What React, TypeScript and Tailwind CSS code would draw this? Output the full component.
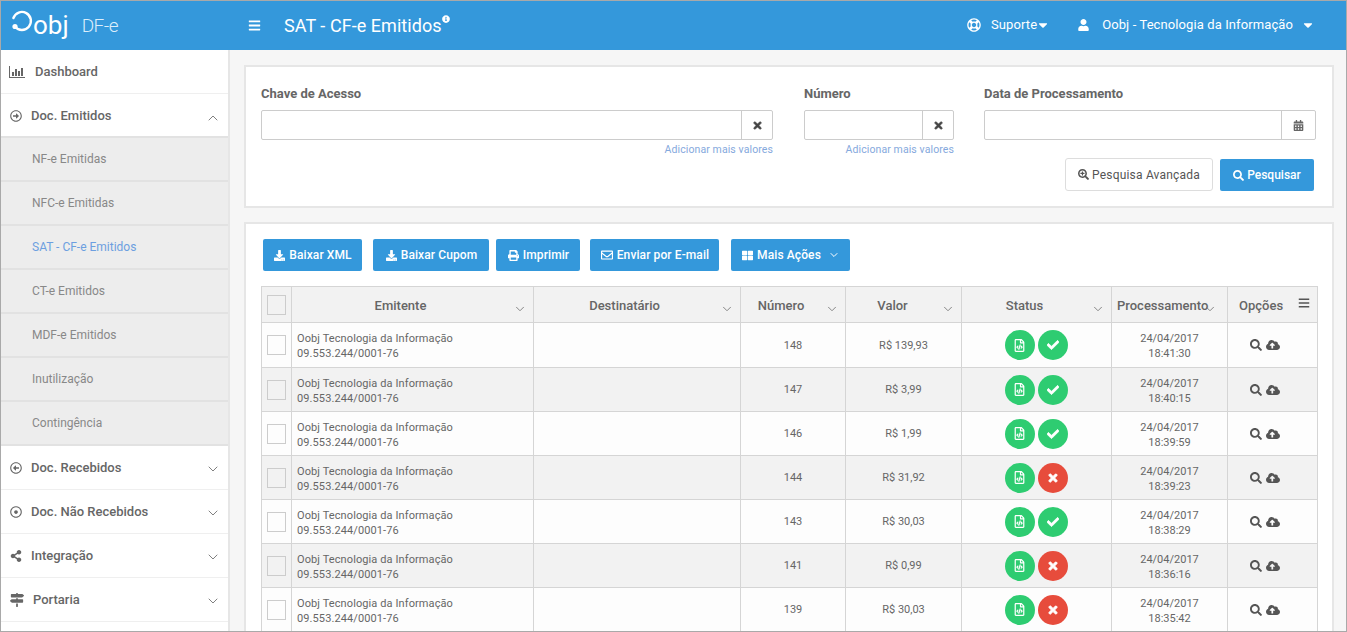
import { ChevronDown, ChevronUp } from 'lucide-react';
import type { ReactNode } from 'react';
import {
  FaBars, FaCalendarAlt, FaCaretDown, FaCheck, FaCloudUploadAlt, FaDownload, FaInfoCircle, FaRegLifeRing,
  FaMapSigns, FaPrint, FaRegArrowAltCircleLeft, FaRegArrowAltCircleRight, FaRegDotCircle, FaRegEnvelope,
  FaRegFileCode, FaSearch, FaSearchPlus, FaShareAlt, FaThLarge, FaTimes, FaUser,
} from 'react-icons/fa';

const subItems = ['NF-e Emitidas', 'NFC-e Emitidas', 'SAT - CF-e Emitidos', 'CT-e Emitidos', 'MDF-e Emitidos', 'Inutilização', 'Contingência'];

const lowerItems = [
  { label: 'Doc. Recebidos', icon: <FaRegArrowAltCircleLeft className="w-3 h-3" />, pad: 'ml-[9px]' },
  { label: 'Doc. Não Recebidos', icon: <FaRegDotCircle className="w-3 h-3" />, pad: 'ml-[9px]' },
  { label: 'Integração', icon: <FaShareAlt className="w-3 h-3" />, pad: 'ml-[9px]' },
  { label: 'Portaria', icon: <FaMapSigns className="w-[14px] h-[14px]" />, pad: 'ml-[9px]' },
];

const rows = [
  { num: '148', valor: 'R$ 139,93', ok: true, date: '24/04/2017', time: '18:41:30' },
  { num: '147', valor: 'R$ 3,99', ok: true, date: '24/04/2017', time: '18:40:15' },
  { num: '146', valor: 'R$ 1,99', ok: true, date: '24/04/2017', time: '18:39:59' },
  { num: '144', valor: 'R$ 31,92', ok: false, date: '24/04/2017', time: '18:39:23' },
  { num: '143', valor: 'R$ 30,03', ok: true, date: '24/04/2017', time: '18:38:29' },
  { num: '141', valor: 'R$ 0,99', ok: false, date: '24/04/2017', time: '18:36:16' },
  { num: '139', valor: 'R$ 30,03', ok: false, date: '24/04/2017', time: '18:35:42' },
];

const headers = [
  { label: 'Emitente', w: 'w-[242px]', lbl: 'pr-[24px]' },
  { label: 'Destinatário', w: 'w-[207px]', lbl: 'pr-[25px]' },
  { label: 'Número', w: 'w-[105px]', lbl: 'pr-[24px]' },
  { label: 'Valor', w: 'w-[116px]', lbl: 'pr-[22px]' },
  { label: 'Status', w: 'w-[150px]', lbl: 'pr-[24px]' },
];

function Logo() {
  return (
    <div className="flex items-center w-[229px] pl-[9px] text-white">
      <svg width="23" height="24" viewBox="0 0 23 24" fill="none" className="mt-[-8px]">
        <path d="M3.4 9 A9 9 0 1 1 5 17.7" stroke="white" strokeWidth="2.4" strokeLinecap="round" />
        <circle cx="5" cy="17.5" r="2.6" fill="white" />
      </svg>
      <span className="text-[26px] font-normal leading-none mt-[-1px]">obj</span>
      <span className="text-[19px] font-light text-[#dbeefb] ml-[13px] tracking-[-0.5px] mt-[3px]">DF-e</span>
    </div>
  );
}

function Header() {
  return (
    <header className="h-[49px] pb-[1px] bg-[#3498db] flex items-center text-white shrink-0">
      <Logo />
      <FaBars className="w-[13px] h-[13px] ml-[18px]" />
      <h1 className="text-[18px] ml-[23px] flex tracking-[0.05px]">
        SAT - CF-e Emitidos
        <FaInfoCircle className="w-[8px] h-[8px] mt-[3px]" />
      </h1>
      <div className="ml-auto flex items-center text-[13px] tracking-[0.1px] pr-[31px]">
        <FaRegLifeRing className="w-[14px] h-[14px]" />
        <span className="ml-[10px]">Suporte</span>
        <FaCaretDown className="w-[14px] h-[14px] -ml-[1px]" />
        <FaUser className="w-[11px] h-[12px] ml-[28px]" />
        <span className="ml-[13px]">Oobj - Tecnologia da Informação</span>
        <FaCaretDown className="w-[14px] h-[14px] ml-[8px]" />
      </div>
    </header>
  );
}

function Sidebar() {
  return (
    <aside className="w-[229px] shrink-0 bg-white border-r-2 border-[#e6e6e6] text-[#666]">
      <div className="h-[44px] flex items-center pl-[8px] border-b border-[#efefef] text-[13px] font-medium">
        <svg width="16" height="12" viewBox="0 0 16 12" className="text-[#666]" fill="currentColor">
          <path d="M0 0h1v11h15v1H0z" />
          <rect x="3" y="6" width="2" height="4" />
          <rect x="6" y="3" width="2" height="7" />
          <rect x="9" y="5" width="2" height="5" />
          <rect x="12" y="2" width="2" height="8" />
        </svg>
        <span className="ml-[10px]">Dashboard</span>
      </div>
      <div className="h-[44px] flex items-center pt-[2px] pl-[9px] pr-[7px] border-b-2 border-[#e2e2e2] text-[13px] font-medium">
        <FaRegArrowAltCircleRight className="w-3 h-3" />
        <span className="ml-[9px]">Doc. Emitidos</span>
        <ChevronUp strokeWidth={1.25} className="w-[16px] h-[16px] ml-auto mt-[3px]" />
      </div>
      {subItems.map((s) => (
        <div
          key={s}
          className={'h-[44px] flex items-center pl-[31px] bg-[#ededed] border-b-2 border-[#e2e2e2] text-[12px] ' + (s.startsWith('SAT') ? 'text-[#6c9fe0]' : 'text-[#888]')}
        >
          {s}
        </div>
      ))}
      {lowerItems.map((it) => (
        <div key={it.label} className="h-[44px] flex items-center pl-[9px] pr-[7px] border-b border-[#efefef] text-[13px] font-medium">
          {it.icon}
          <span className={it.pad}>{it.label}</span>
          <ChevronDown strokeWidth={1.25} className="w-[16px] h-[16px] ml-auto mt-[3px]" />
        </div>
      ))}
    </aside>
  );
}

function Field({ label, width, addon, icon, more }: { label: string; width: string; addon: string; icon: ReactNode; more?: boolean }) {
  return (
    <div className={width}>
      <label className="block text-[13px] font-bold text-[#666] leading-[15px] mb-[9px]">{label}</label>
      <div className="flex h-[30px] border border-[#ccc] rounded-[2px] bg-white">
        <input className="flex-1 min-w-0 outline-none" />
        <span className={addon + ' flex items-center justify-center border-l border-[#ccc] text-[#444]'}>{icon}</span>
      </div>
      {more && <div className="text-[10.5px] text-[#85a9dd] text-right mt-[3px] leading-[13px] tracking-[0.1px]">Adicionar mais valores</div>}
    </div>
  );
}

function SearchPanel() {
  return (
    <section className="bg-white border-2 border-[#e6e6e6] h-[143px] pt-[19px] px-[14px]">
      <div className="flex gap-[30px] h-[76px] ml-[1px]">
        <Field label="Chave de Acesso" width="w-[512px]" addon="w-[31px]" icon={<FaTimes className="w-[11px] h-[11px] stroke-[30px]" />} more />
        <Field label="Número" width="w-[150px] ml-[1px]" addon="w-[31px]" icon={<FaTimes className="w-[11px] h-[11px] stroke-[30px]" />} more />
        <Field label="Data de Processamento" width="w-[332px]" addon="w-[34px]" icon={<FaCalendarAlt className="w-[11px] h-[11px] text-[#666]" />} />
      </div>
      <div className="flex justify-end gap-[7px] pr-[4px] mt-[-4px]">
        <button className="w-[148px] h-[33px] border border-[#ddd] rounded-[3px] bg-white text-[#555] text-[12px] tracking-[0.2px] flex items-center justify-center gap-[3px]">
          <FaSearchPlus className="w-[11px] h-[11px]" /> Pesquisa Avançada
        </button>
        <button className="w-[94px] h-[32px] mt-[1px] rounded-[2px] bg-[#3498db] text-white text-[12px] font-medium flex items-center justify-center gap-[3px]">
          <FaSearch className="w-[11px] h-[11px]" /> Pesquisar
        </button>
      </div>
    </section>
  );
}

function ActionButtons() {
  const cls = 'h-[32px] pl-[1px] rounded-[2px] bg-[#3498db] text-white text-[12px] font-medium tracking-[0.1px] flex items-center justify-center gap-[4px]';
  return (
    <div className="flex ml-[2px] mb-[15px]">
      <button className={cls + ' w-[99px]'}><FaDownload className="w-[11px] h-[11px]" /> Baixar XML</button>
      <button className={cls + ' w-[116px] ml-[11px]'}><FaDownload className="w-[11px] h-[11px]" /> Baixar Cupom</button>
      <button className={cls + ' w-[84px] ml-[7px]'}><FaPrint className="w-[11px] h-[11px]" /> Imprimir</button>
      <button className={cls + ' w-[129px] ml-[10px]'}><FaRegEnvelope className="w-[12px] h-[12px]" /> Enviar por E-mail</button>
      <button className={cls + ' w-[119px] ml-[12px]'}>
        <FaThLarge className="w-[11px] h-[11px]" /> Mais Ações <ChevronDown className="w-[12px] h-[12px] ml-[3px]" />
      </button>
    </div>
  );
}

function Table() {
  const cell = 'border border-[#d5d5d5] p-0';
  return (
    <table className="table-fixed border-collapse w-[1057px] text-[#666]">
      <thead>
        <tr className="h-[36px] bg-[#f2f2f2] text-[13px]">
          <th className={cell + ' w-[30px]'}>
            <span className="block w-[19px] h-[20px] ml-[5px] border border-[#ccc]" />
          </th>
          {headers.map((h) => (
            <th key={h.label} className={cell + ' ' + h.w + ' font-medium relative'}>
              <span className={'block pt-[2px] text-center ' + h.lbl}>{h.label}</span>
              <ChevronDown strokeWidth={1.5} className="w-[14px] h-[14px] absolute right-[6px] top-[15px] text-[#777]" />
            </th>
          ))}
          <th className={cell + ' w-[116px] font-medium relative'}>
            <span className="block pt-[2px] text-left pl-[5px]">Processamento</span>
            <ChevronDown strokeWidth={1.5} className="w-[14px] h-[14px] absolute right-[10px] top-[15px] text-[#777]" />
          </th>
          <th className={cell + ' w-[90px] font-medium relative'}>
            <span className="block pt-[2px] text-left pl-[11px]">Opções</span>
            <FaBars className="w-[12px] h-[12px] absolute right-[7px] top-[10px] text-[#555]" />
          </th>
        </tr>
      </thead>
      <tbody className="text-[11px]">
        {rows.map((r, i) => (
          <tr key={r.num} className={(i === 0 ? 'h-[45px] ' : 'h-[44px] ') + (i % 2 ? 'bg-[#f2f2f2]' : 'bg-[#fdfdfd]')}>
            <td className={cell}>
              <span className="block w-[19px] h-[20px] ml-[5px] border border-[#ccc]" />
            </td>
            <td className={cell + ' pl-[5px] pt-[2px] leading-[15px] tracking-[0.1px]'}>
              Oobj Tecnologia da Informação<br />09.553.244/0001-76
            </td>
            <td className={cell} />
            <td className={cell + ' pt-[2px] text-center'}>{r.num}</td>
            <td className={cell + ' pt-[2px] text-center'}>{r.valor}</td>
            <td className={cell}>
              <div className="flex justify-center gap-[3px] pr-[1px]">
                <span className="w-[30px] h-[30px] rounded-full bg-[#2ecc71] text-white flex items-center justify-center">
                  <FaRegFileCode className="w-[11px] h-[13px]" />
                </span>
                <span className={'w-[30px] h-[30px] rounded-full text-white flex items-center justify-center ' + (r.ok ? 'bg-[#2ecc71]' : 'bg-[#e74c3c]')}>
                  {r.ok ? <FaCheck className="w-[12px] h-[12px] stroke-[30px]" /> : <FaTimes className="w-[12px] h-[12px] stroke-[40px]" />}
                </span>
              </div>
            </td>
            <td className={cell + ' pt-[2px] text-center leading-[15px]'}>{r.date}<br />{r.time}</td>
            <td className={cell}>
              <div className="flex items-center gap-[4px] pl-[22px] text-[#555]">
                <FaSearch className="w-[12px] h-[12px]" />
                <FaCloudUploadAlt className="w-[14px] h-[14px]" />
              </div>
            </td>
          </tr>
        ))}
      </tbody>
    </table>
  );
}

export default function App() {
  return (
    <div className="h-[632px] overflow-hidden border border-[#a9a9a9] flex flex-col bg-[#f6f6f6] [font-family:Roboto,sans-serif]">
      <Header />
      <div className="flex flex-1 min-h-0">
        <Sidebar />
        <main className="flex-1 min-w-0 pt-[15px] pl-[14px] pr-[12px] overflow-hidden">
          <SearchPanel />
          <section className="bg-white border-2 border-[#e6e6e6] mt-[14px] pt-[15px] pl-[15px] pb-[40px]">
            <ActionButtons />
            <Table />
          </section>
        </main>
      </div>
    </div>
  );
}
